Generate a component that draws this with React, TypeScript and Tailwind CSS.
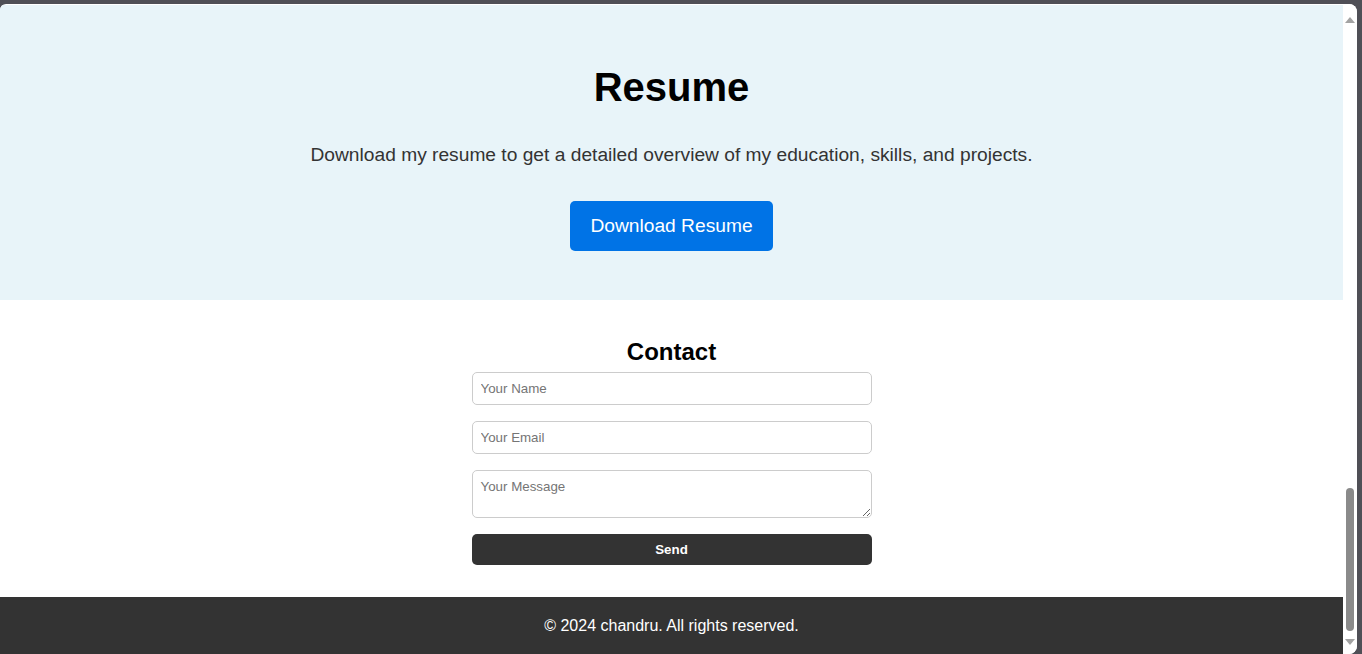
import React from "react";

export default function App() {
  return (
    <div
      className="w-[1362px] h-[654px] bg-[#4f4f56] pt-[4px] pr-[5px] overflow-hidden"
      style={{ fontFamily: '"Liberation Sans", Arial, sans-serif' }}
    >
      <div className="h-[650px] bg-white rounded-tl-[6px] rounded-tr-[8px] rounded-br-[8px] flex overflow-hidden">
        <div className="w-[1343px] pt-[1px] flex flex-col">
          <section className="bg-[#e8f4f9] h-[295px] pt-[59px] flex flex-col items-center">
            <h1 className="text-[40px] leading-[46px] font-bold text-black">Resume</h1>
            <p className="mt-[34px] text-[19.2px] leading-[22px] text-[#333]">
              Download my resume to get a detailed overview of my education, skills, and projects.
            </p>
            <button className="mt-[35px] h-[50px] px-[20px] bg-[#0073e6] text-white text-[19.2px] leading-[22px] rounded-[5px]">
              Download Resume
            </button>
          </section>
          <section className="bg-white h-[297px] pt-[38px] flex flex-col items-center">
            <h2 className="text-[24px] leading-[28px] font-bold text-black">Contact</h2>
            <form className="mt-[6px] w-[400px] flex flex-col gap-[16px]" onSubmit={(e) => e.preventDefault()}>
              <input
                type="text"
                placeholder="Your Name"
                className="h-[33px] w-full border border-[#ccc] rounded-[5px] px-[8px] text-[13.333px] leading-[15px] bg-white placeholder:text-[#757575] outline-none"
              />
              <input
                type="email"
                placeholder="Your Email"
                className="h-[33px] w-full border border-[#ccc] rounded-[5px] px-[8px] text-[13.333px] leading-[15px] bg-white placeholder:text-[#757575] outline-none"
              />
              <textarea
                placeholder="Your Message"
                className="h-[48px] w-full border border-[#ccc] rounded-[5px] px-[8px] py-[8px] text-[13.333px] leading-[15px] bg-white placeholder:text-[#757575] outline-none block"
                style={{ resize: "both" }}
              />
              <button className="h-[31px] w-full bg-[#333] text-white text-[13.333px] font-bold rounded-[5px]">
                Send
              </button>
            </form>
          </section>
          <footer className="bg-[#333] h-[57px] flex items-center justify-center text-white text-[16px] leading-[19px]">
            © 2024 chandru. All rights reserved.
          </footer>
        </div>
        <div className="w-[14px] bg-white flex flex-col items-center relative">
          <svg width="10" height="6" viewBox="0 0 10 6" className="mt-[13px]">
            <polygon points="5,0 10,6 0,6" fill="#a3a3a3" />
          </svg>
          <div className="absolute left-[3px] top-[484px] w-[8px] h-[143px] rounded-full bg-[#8a8a8a]" />
          <svg width="10" height="6" viewBox="0 0 10 6" className="absolute left-[2px] top-[635px]">
            <polygon points="0,0 10,0 5,6" fill="#a3a3a3" />
          </svg>
        </div>
      </div>
    </div>
  );
}
